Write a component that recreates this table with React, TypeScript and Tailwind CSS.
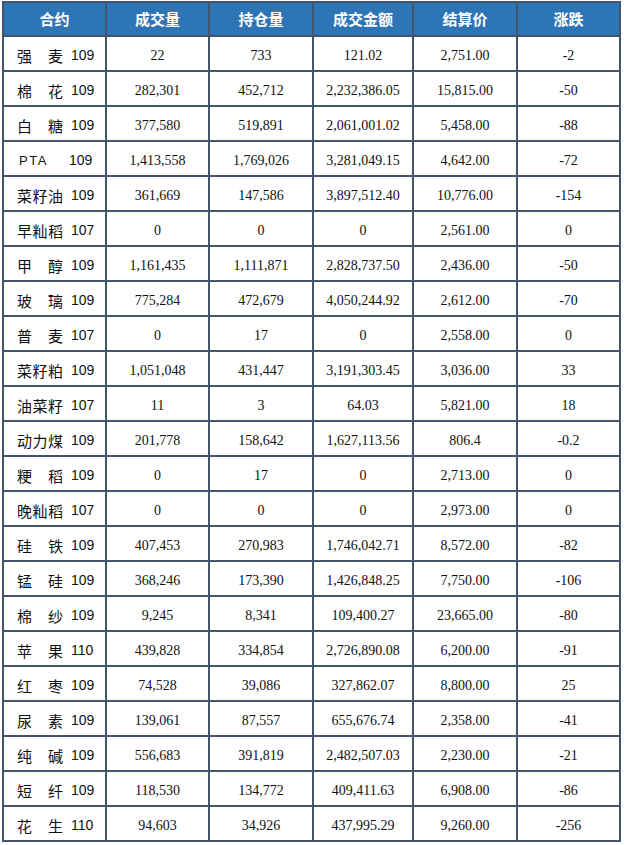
const HEADERS = ["合约", "成交量", "持仓量", "成交金额", "结算价", "涨跌"];

// [name, code, volume, openInterest, turnover, settle, change]
const ROWS: string[][] = [
  ["强麦", "109", "22", "733", "121.02", "2,751.00", "-2"],
  ["棉花", "109", "282,301", "452,712", "2,232,386.05", "15,815.00", "-50"],
  ["白糖", "109", "377,580", "519,891", "2,061,001.02", "5,458.00", "-88"],
  ["PTA", "109", "1,413,558", "1,769,026", "3,281,049.15", "4,642.00", "-72"],
  ["菜籽油", "109", "361,669", "147,586", "3,897,512.40", "10,776.00", "-154"],
  ["早籼稻", "107", "0", "0", "0", "2,561.00", "0"],
  ["甲醇", "109", "1,161,435", "1,111,871", "2,828,737.50", "2,436.00", "-50"],
  ["玻璃", "109", "775,284", "472,679", "4,050,244.92", "2,612.00", "-70"],
  ["普麦", "107", "0", "17", "0", "2,558.00", "0"],
  ["菜籽粕", "109", "1,051,048", "431,447", "3,191,303.45", "3,036.00", "33"],
  ["油菜籽", "107", "11", "3", "64.03", "5,821.00", "18"],
  ["动力煤", "109", "201,778", "158,642", "1,627,113.56", "806.4", "-0.2"],
  ["粳稻", "109", "0", "17", "0", "2,713.00", "0"],
  ["晚籼稻", "107", "0", "0", "0", "2,973.00", "0"],
  ["硅铁", "109", "407,453", "270,983", "1,746,042.71", "8,572.00", "-82"],
  ["锰硅", "109", "368,246", "173,390", "1,426,848.25", "7,750.00", "-106"],
  ["棉纱", "109", "9,245", "8,341", "109,400.27", "23,665.00", "-80"],
  ["苹果", "110", "439,828", "334,854", "2,726,890.08", "6,200.00", "-91"],
  ["红枣", "109", "74,528", "39,086", "327,862.07", "8,800.00", "25"],
  ["尿素", "109", "139,061", "87,557", "655,676.74", "2,358.00", "-41"],
  ["纯碱", "109", "556,683", "391,819", "2,482,507.03", "2,230.00", "-21"],
  ["短纤", "109", "118,530", "134,772", "409,411.63", "6,908.00", "-86"],
  ["花生", "110", "94,603", "34,926", "437,995.29", "9,260.00", "-256"],
];

const CJK = "font-['Noto_Sans_CJK_SC',sans-serif]";
const LATIN = "font-['Liberation_Sans','Noto_Sans_CJK_SC',sans-serif]";

function Contract({ name, code }: { name: string; code: string }) {
  const isAscii = /^[A-Z]+$/.test(name);
  return (
    <div className="flex h-full items-center bg-white pl-[13px] pt-[3px] text-[#111]">
      {isAscii ? (
        <span className={`${LATIN} w-[44px] pl-[2px] text-[13px] leading-none tracking-[1.5px]`}>{name}</span>
      ) : (
        <span className={`${CJK} flex w-[46px] justify-between text-[15px] leading-none`}>
          {name.split("").map((ch, i) => (
            <span key={i}>{ch}</span>
          ))}
        </span>
      )}
      <span className={`${LATIN} ml-[8px] text-[14px] leading-none`}>{code}</span>
    </div>
  );
}

export default function App() {
  return (
    <div className="h-[845px] w-[624px] bg-white pl-[2px] pt-[1px]">
      <div className="grid w-[619px] grid-cols-[101px_101px_102px_98px_102px_101px] grid-rows-[32px] auto-rows-[33px] gap-[2px] border-2 border-[#44546a] bg-[#44546a]">
        {HEADERS.map((h) => (
          <div
            key={h}
            className={`${CJK} flex items-center justify-center bg-[#2e75b6] text-[15px] font-bold text-white`}
          >
            {h}
          </div>
        ))}
        {ROWS.map((r) => (
          <div key={r[0]} className="contents">
            <Contract name={r[0]} code={r[1]} />
            {r.slice(2).map((v, i) => (
              <div
                key={i}
                className="flex items-center justify-center bg-white pt-[3px] font-['Liberation_Serif',serif] text-[14px] text-[#111]"
              >
                {v}
              </div>
            ))}
          </div>
        ))}
      </div>
    </div>
  );
}
